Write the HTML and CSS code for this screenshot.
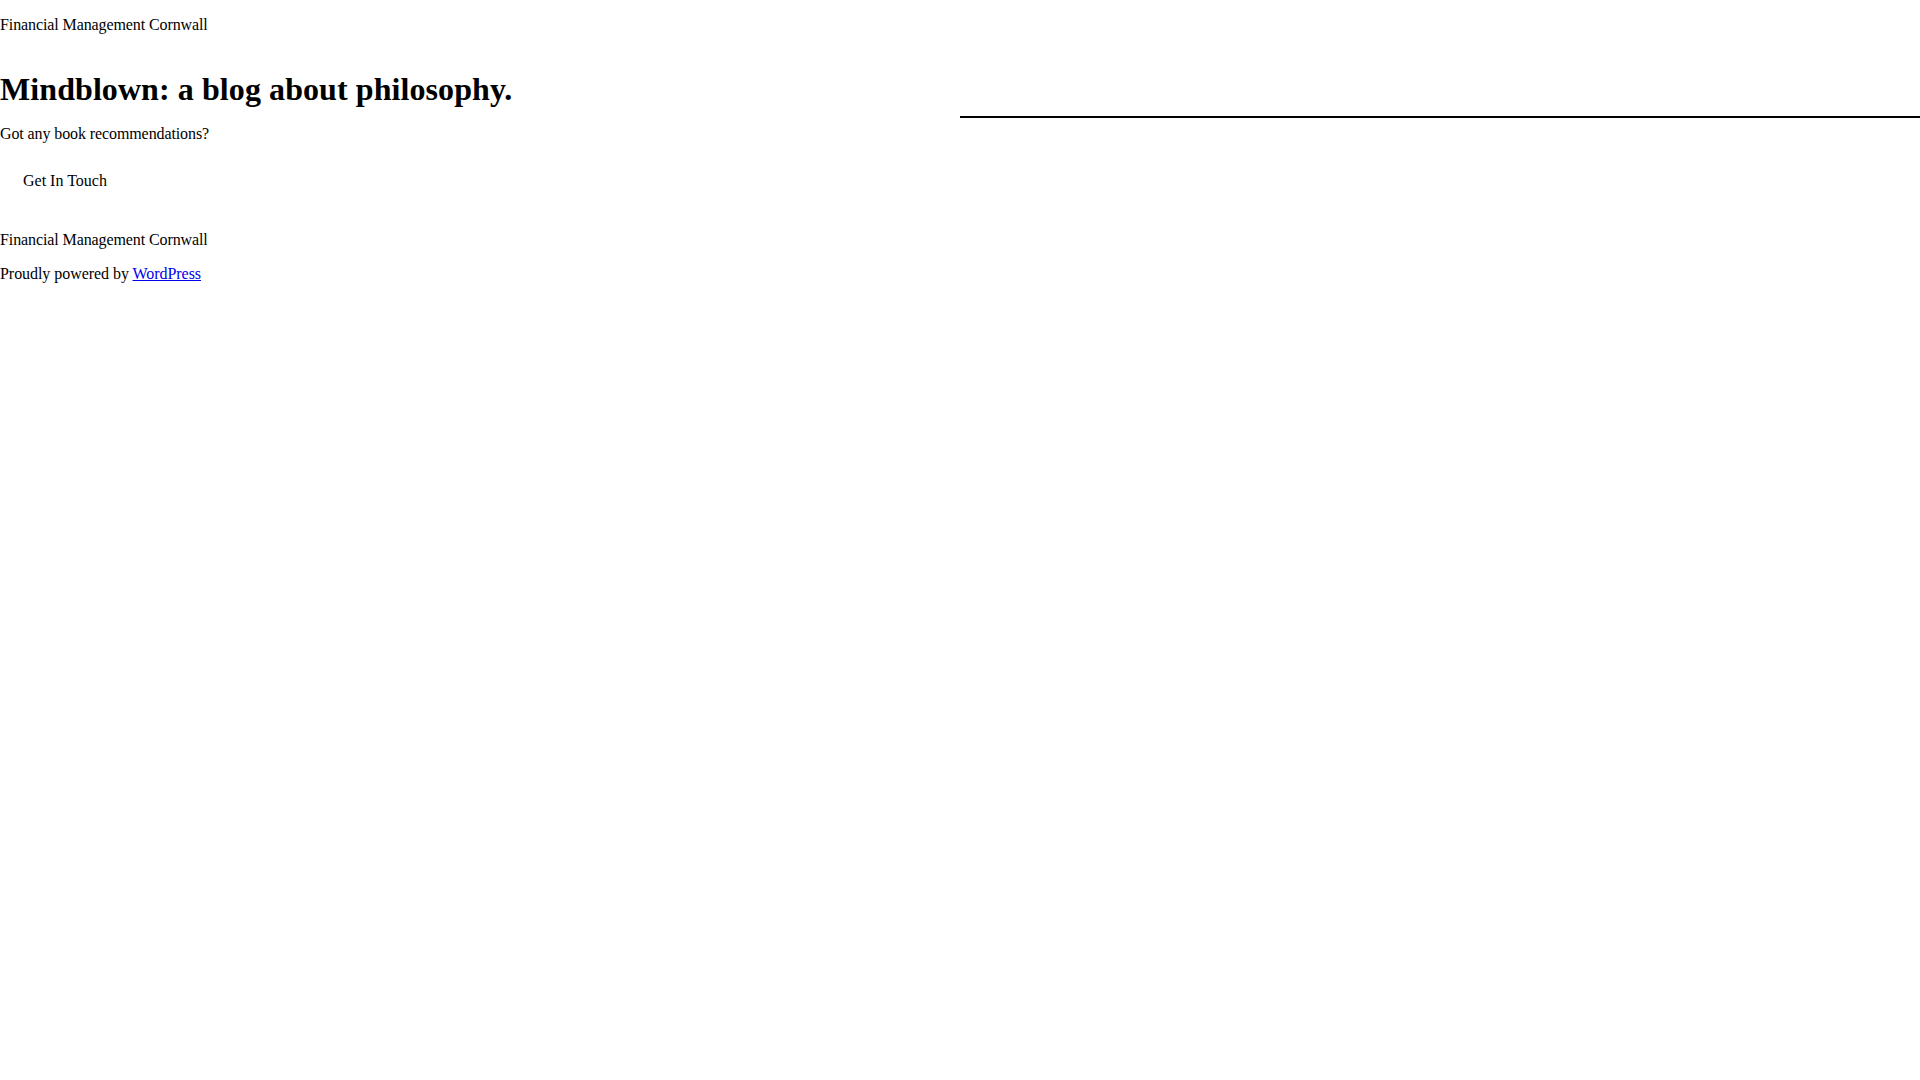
FILE: index.html
```html
<!DOCTYPE html>
<html lang="en">
<head>
<meta charset="utf-8">
<title>Financial Management Cornwall</title>
<link rel="stylesheet" href="styles.css">
</head>
<body>
<header class="site-header">
  <p class="site-title">Financial Management Cornwall</p>
</header>
<main class="site-main">
  <section class="hero">
    <div class="hero-text">
      <h1 class="hero-heading">Mindblown: a blog about philosophy.</h1>
      <p class="hero-sub">Got any book recommendations?</p>
    </div>
    <div class="hero-aside">
      <hr class="separator">
    </div>
  </section>
  <div class="cta">
    <span class="cta-button">Get In Touch</span>
  </div>
</main>
<footer class="site-footer">
  <p class="footer-title">Financial Management Cornwall</p>
  <p class="footer-credit">Proudly powered by <a class="footer-link" href="#">WordPress</a></p>
</footer>
</body>
</html>
```
FILE: styles.css
```css
html, body {
  margin: 0;
  padding: 0;
  background: #fff;
}
body {
  font-family: "Liberation Serif", "Times New Roman", serif;
  font-size: 16px;
  line-height: normal;
  color: #000;
  letter-spacing: -0.1px;
}
.site-header {
  padding-top: 16px;
}
.site-title {
  margin: 0;
}
.hero {
  display: grid;
  grid-template-columns: 1fr 1fr;
  margin-top: 37px;
}
.hero-heading {
  margin: 0;
  font-size: 32px;
  font-weight: bold;
  letter-spacing: 0.08px;
}
.hero-sub {
  margin: 17px 0 0;
}
.separator {
  margin: 45px 0 0;
  border: 0;
  height: 2px;
  background: #000;
}
.cta {
  margin-top: 29px;
  padding-left: 23px;
}
.cta-button {
  display: inline-block;
  letter-spacing: 0;
}
.site-footer {
  margin-top: 41px;
}
.footer-title {
  margin: 0;
}
.footer-credit {
  margin: 16px 0 0;
  letter-spacing: -0.05px;
}
.footer-link {
  color: #0000ee;
  text-decoration: underline;
}
```
